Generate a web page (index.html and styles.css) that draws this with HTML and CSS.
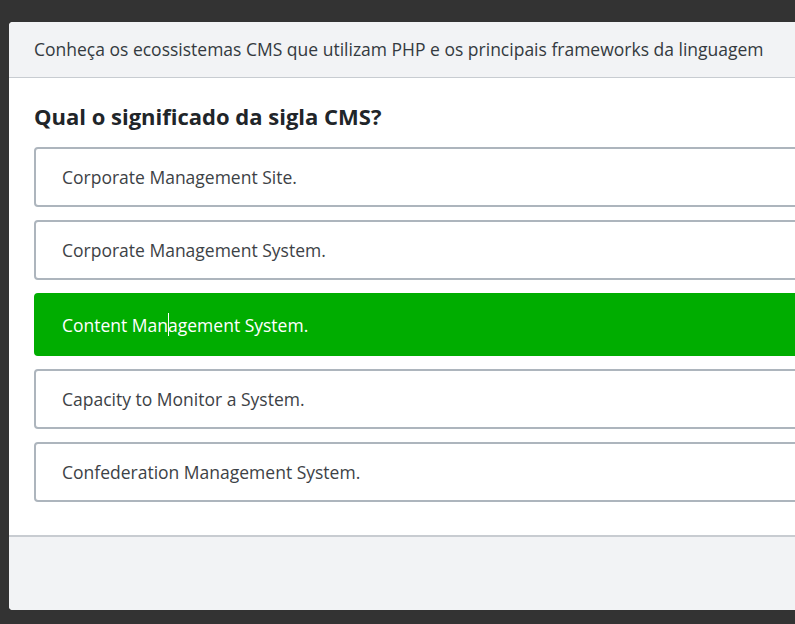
FILE: index.html
```html
<!DOCTYPE html>
<html lang="pt">
<head>
<meta charset="utf-8">
<link rel="stylesheet" href="styles.css">
</head>
<body>
<div class="modal">
  <div class="modal-header">Conheça os ecossistemas CMS que utilizam PHP e os principais frameworks da linguagem</div>
  <div class="modal-body">
    <h2 class="question">Qual o significado da sigla CMS?</h2>
    <div class="options">
      <div class="option">Corporate Management Site.</div>
      <div class="option">Corporate Management System.</div>
      <div class="option correct">Content Man<span class="caret"></span>agement System.</div>
      <div class="option">Capacity to Monitor a System.</div>
      <div class="option">Confederation Management System.</div>
    </div>
  </div>
  <div class="modal-footer"></div>
</div>
</body>
</html>
```
FILE: styles.css
```css
html, body {
  margin: 0;
  padding: 0;
  background: #333333;
  overflow: hidden;
  width: 795px;
  height: 624px;
}
body {
  font-family: "Open Sans", sans-serif;
  padding-top: 22px;
  padding-left: 9px;
  box-sizing: border-box;
}
.modal {
  width: 900px;
  height: 588px;
  background: #ffffff;
  border-radius: 4px;
  overflow: hidden;
  display: flex;
  flex-direction: column;
}
.modal-header {
  height: 56px;
  box-sizing: border-box;
  background: #f2f3f5;
  border-bottom: 1px solid #c8ccd1;
  padding: 0 25px 1px;
  display: flex;
  align-items: center;
  font-size: 17.5px;
  color: #343a40;
}
.modal-body {
  padding: 23px 25px 33px;
}
.question {
  margin: 0 0 16px;
  font-size: 22px;
  font-weight: 700;
  color: #212529;
  line-height: 30px;
}
.options {
  display: flex;
  flex-direction: column;
  gap: 13px;
}
.option {
  height: 60px;
  box-sizing: border-box;
  border: 2px solid #adb5bd;
  border-radius: 4px;
  padding: 0 26px;
  display: flex;
  align-items: center;
  font-size: 17.5px;
  color: #3d4246;
}
.option.correct {
  height: 63px;
  background: #00ad00;
  border-color: #00ad00;
  color: #ffffff;
}
.caret {
  display: inline-block;
  width: 1px;
  height: 23px;
  background: #ffffff;
  margin: 0 -0.5px;
  vertical-align: middle;
}
.modal-footer {
  flex: 1;
  background: #f2f3f5;
  border-top: 2px solid #c8ccd1;
}
```
